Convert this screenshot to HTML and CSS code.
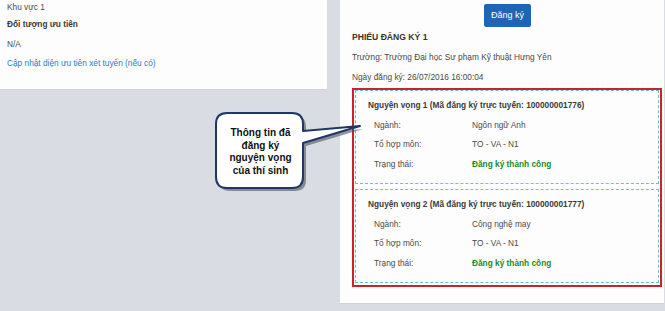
FILE: index.html
```html
<!DOCTYPE html>
<html lang="vi">
<head>
    <meta charset="UTF-8">
    <title>Phiếu đăng ký</title>
    <link rel="stylesheet" href="styles.css">
</head>
<body>
<div class="page">
    <div class="card card-left">
        <p class="line first">Khu vực 1</p>
        <p class="line title">Đối tượng ưu tiên</p>
        <p class="line">N/A</p>
        <a class="line link" href="javascript:;">Cập nhật diện ưu tiên xét tuyển (nếu có)</a>
    </div>
    <div class="card card-right">
        <div class="btn-row"><a href="javascript:;" class="btn">Đăng ký</a></div>
        <p class="line heading">PHIẾU ĐĂNG KÝ 1</p>
        <p class="line">Trường: Trường Đại học Sư phạm Kỹ thuật Hưng Yên</p>
        <p class="line">Ngày đăng ký: 26/07/2016 16:00:04</p>
        <div class="wishes">
            <div class="wish">
                <p class="wish-title">Nguyện vọng 1 (Mã đăng ký trực tuyến: 100000001776)</p>
                <div class="row"><span class="label">Ngành:</span><span>Ngôn ngữ Anh</span></div>
                <div class="row"><span class="label">Tổ hợp môn:</span><span>TO - VA - N1</span></div>
                <div class="row"><span class="label">Trạng thái:</span><span class="ok">Đăng ký thành công</span></div>
            </div>
            <div class="wish">
                <p class="wish-title">Nguyện vọng 2 (Mã đăng ký trực tuyến: 100000001777)</p>
                <div class="row"><span class="label">Ngành:</span><span>Công nghệ may</span></div>
                <div class="row"><span class="label">Tổ hợp môn:</span><span>TO - VA - N1</span></div>
                <div class="row"><span class="label">Trạng thái:</span><span class="ok">Đăng ký thành công</span></div>
            </div>
        </div>
    </div>
</div>

<div class="callout">
    <svg class="callout-shape" width="152" height="84" viewBox="0 0 152 84">
        <path d="M13 1 H78 Q89 1 89 12 V19 L146 14 L89 31 V65 Q89 76 78 76 H13 Q2 76 2 65 V12 Q2 1 13 1 Z"
              fill="#3f4752" opacity="0.55" transform="translate(3 3)"/>
        <path d="M13 1 H78 Q89 1 89 12 V19 L146 14 L89 31 V65 Q89 76 78 76 H13 Q2 76 2 65 V12 Q2 1 13 1 Z"
              fill="#fff" stroke="#1f3766" stroke-width="2" stroke-linejoin="round"/>
    </svg>
    <div class="callout-text">Thông tin đã<br>đăng ký<br>nguyện vọng<br>của thí sinh</div>
</div>
</body>
</html>
```

FILE: styles.css
```css
*{margin:0;padding:0;box-sizing:border-box;}

body{background:#d9dde3;font-family:"Liberation Sans",Arial,sans-serif;font-size:8.3px;color:#4a4a4a;}

a{text-decoration:none;}

.page{display:flex;align-items:flex-start;gap:13px;}

.card{background:#fdfdfd;border-bottom:1px solid #cfd3d9;}
.card-left{width:327px;height:90px;padding:0 7px;display:flex;flex-direction:column;}
.card-right{flex:1;height:304px;padding:4px 2px 0 12px;margin-right:1px;}

.line{display:block;line-height:20px;height:20px;}
.card-left .line{line-height:19.5px;height:19.5px;}
.card-left .first{line-height:14px;height:15px;}
.title{font-weight:bold;color:#3a3a3a;}
.link{color:#2c7bc9;}

.btn-row{display:flex;justify-content:center;padding-left:1px;height:23px;}
.btn{display:block;width:47px;height:23px;line-height:23px;text-align:center;background:#1e65b6;color:#fff;border-radius:2px;font-size:9px;}

.heading{font-weight:bold;color:#333;font-size:8.6px;}

.wishes{margin-top:1px;border:2px solid #cd2029;padding:0 1px 2px 1px;}
.wish{border:1px dashed #5ec5d6;padding:5px 0 0 12px;height:94px;}
.wish + .wish{margin-top:5px;}
.wish-title{font-weight:bold;color:#3a3a3a;line-height:19.5px;height:19.5px;}
.row{display:flex;line-height:19.5px;height:19.5px;padding-left:6px;}
.label{width:98px;}
.ok{color:#1b8a1b;font-weight:bold;}

.callout{position:absolute;left:214px;top:112px;width:152px;height:84px;}
.callout-shape{position:absolute;left:0;top:0;}
.callout-text{position:absolute;left:2px;top:15px;width:89px;text-align:center;font-family:"Liberation Sans",Arial,sans-serif;font-weight:bold;font-size:10px;line-height:12.5px;color:#111;}
```
